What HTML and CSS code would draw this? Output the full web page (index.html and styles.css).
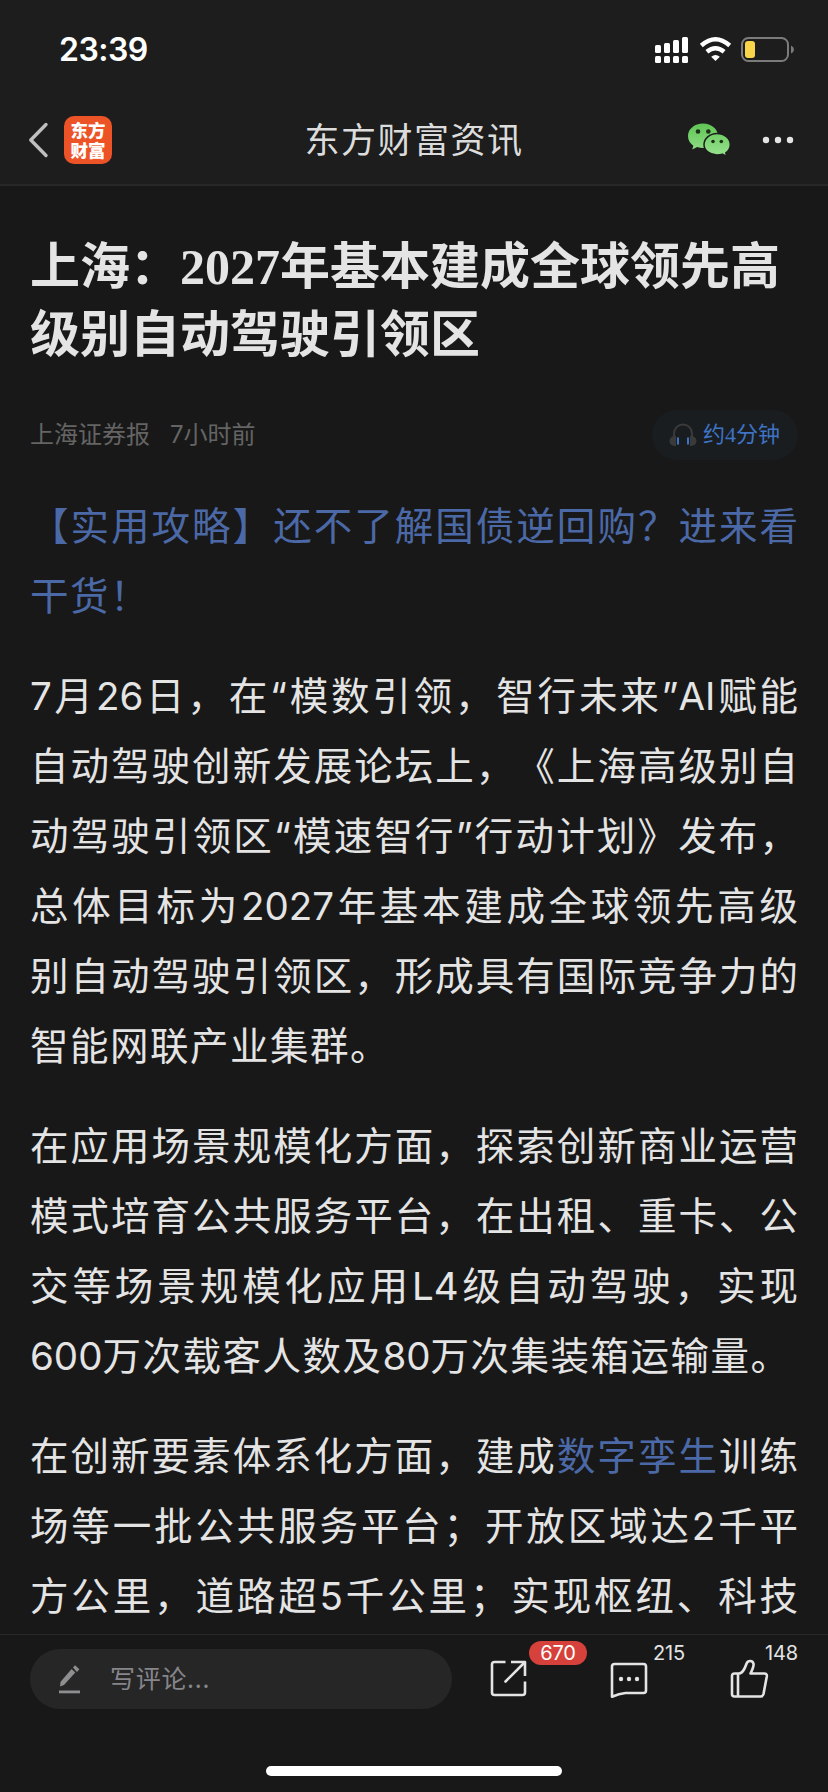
FILE: index.html
```html
<!DOCTYPE html>
<html lang="zh-CN">
<head>
<meta charset="utf-8">
<title>东方财富资讯</title>
<link rel="stylesheet" href="styles.css">
</head>
<body>
<div class="screen">
  <header class="top">
    <div class="status">
      <span class="clock">23:39</span>
      <svg class="status-icons" width="142" height="30" viewBox="0 0 142 30">
        <g fill="#fff">
          <rect x="1" y="10" width="6" height="8" rx="1.5"/><rect x="10" y="8" width="6" height="10" rx="1.5"/><rect x="19" y="5" width="6" height="13" rx="1.5"/><rect x="28" y="2" width="6" height="16" rx="1.5"/>
          <rect x="1" y="21" width="6" height="7" rx="1.5"/><rect x="10" y="21" width="6" height="7" rx="1.5"/><rect x="19" y="21" width="6" height="7" rx="1.5"/><rect x="28" y="21" width="6" height="7" rx="1.5"/>
          <path d="M61.500 26l-4.300-4.300q4.300-3.500 8.600 0z"/>
        </g>
        <path d="M47.300 10.500q14.200-12.500 28.400 0M52.900 16.800q8.600-7.200 17.200 0" fill="none" stroke="#fff" stroke-width="4.400"/>
        <rect x="88" y="3" width="46" height="23" rx="6.500" fill="none" stroke="#7b7b7b" stroke-width="2"/>
        <rect x="91" y="6" width="10" height="17" rx="3" fill="#f9d649"/>
        <path d="M137 10.500q3 1.500 3 4t-3 4z" fill="#7b7b7b"/>
      </svg>
    </div>
    <nav class="nav">
      <svg class="back" width="22" height="38" viewBox="0 0 22 38"><path d="M19 3.500L3.800 19 19 34.500" fill="none" stroke="#bfbfbf" stroke-width="3.400" stroke-linecap="round" stroke-linejoin="round"/></svg>
      <div class="logo">东方<br>财富</div>
      <h2 class="nav-title">东方财富资讯</h2>
      <svg class="wechat" width="44" height="36" viewBox="0 0 44 36">
        <defs><linearGradient id="wg" x1="0" y1="0" x2="0" y2="36" gradientUnits="userSpaceOnUse"><stop offset="0" stop-color="#5dc452"/><stop offset="1" stop-color="#9be493"/></linearGradient></defs>
        <path d="M16 1.500C7.500 1.500 1 7 1 14c0 4 2 7.400 5.400 9.700L5.200 27.500l5-2.500c1.900.6 3.800.9 5.800.9 8.500 0 15-5.400 15-12S24.500 1.500 16 1.500z" fill="url(#wg)"/>
        <path d="M30 11.500c7.300 0 13.300 4.800 13.300 11 0 3.500-1.700 6.400-4.500 8.300l.9 3.500-4.300-2.200c-1.600.5-3.500.8-5.400.8-7.300 0-13-4.600-13-10.400s5.700-11 13-11z" fill="url(#wg)" stroke="#1d1d1d" stroke-width="1.500"/>
        <g fill="#1d3018"><circle cx="11" cy="9.500" r="2.300"/><circle cx="21.300" cy="9.500" r="2.300"/><circle cx="26" cy="19.500" r="1.800"/><circle cx="34.300" cy="19.500" r="1.800"/></g>
      </svg>
      <svg class="more" width="32" height="8" viewBox="0 0 32 8" fill="#e4e4e4"><circle cx="4" cy="4" r="3.200"/><circle cx="16" cy="4" r="3.200"/><circle cx="28" cy="4" r="3.200"/></svg>
    </nav>
  </header>
  <main class="article">
    <h1 class="title">上海：<span class="num">2027</span>年基本建成全球领先高<br>级别自动驾驶引领区</h1>
    <div class="meta">
      <span>上海证券报</span><span class="time">7小时前</span>
      <div class="listen">
        <svg width="28" height="24" viewBox="0 0 28 24"><path d="M5 13v-2.500a9 9 0 0 1 18 0V13" fill="none" stroke="#3a3a3a" stroke-width="2"/><path d="M7 13H5.500a5 5 0 0 0 0 10H7zM21 13h1.500a5 5 0 0 1 0 10H21z" fill="#3a3a3a"/><path d="M9 14.500v7M19 14.500v7" stroke="#3f73c4" stroke-width="2"/></svg>
        <span>约4分钟</span>
      </div>
    </div>
    <p class="para link"><span class="line">【实用攻略】还不了解国债逆回购？进来看</span><span class="line last">干货！</span></p>
    <p class="para"><span class="line">7月26日，在“模数引领，智行未来”AI赋能</span><span class="line">自动驾驶创新发展论坛上，《上海高级别自</span><span class="line">动驾驶引领区“模速智行”行动计划》发布，</span><span class="line">总体目标为2027年基本建成全球领先高级</span><span class="line">别自动驾驶引领区，形成具有国际竞争力的</span><span class="line last">智能网联产业集群。</span></p>
    <p class="para"><span class="line">在应用场景规模化方面，探索创新商业运营</span><span class="line">模式培育公共服务平台，在出租、重卡、公</span><span class="line">交等场景规模化应用L4级自动驾驶，实现</span><span class="line last"><span class="digits">600</span>万次载客人数及<span class="digits">80</span>万次集装箱运输量。</span></p>
    <p class="para"><span class="line">在创新要素体系化方面，建成<span class="link">数字孪生</span>训练</span><span class="line">场等一批公共服务平台；开放区域达2千平</span><span class="line">方公里，道路超5千公里；实现枢纽、科技</span></p>
  </main>
  <footer class="bottom">
    <div class="actions">
      <div class="comment">
        <svg width="22" height="30" viewBox="0 0 22 30" fill="#8e8e90"><path d="M1 22.500l.6-4.800L12.600 5l3.700 3.400L5 21z"/><path d="M14 3.600L16 1.200l4.400 4.100-2.500 2.600z"/><rect x="0" y="26.500" width="21" height="2.800"/></svg>
        <span>写评论...</span>
      </div>
      <div class="action">
        <svg width="38" height="38" viewBox="0 0 38 38" fill="none" stroke="#e4e4e4" stroke-width="2.600" stroke-linecap="butt" stroke-linejoin="round"><path d="M15.500 2H4.500Q2 2 2 4.500v28Q2 35 4.500 35h28q2.500 0 2.500-2.500V21.500M21 2h14v14"/><path d="M34 3L15.500 21.500" stroke-linecap="round"/></svg>
        <span class="badge">670</span>
      </div>
      <div class="action">
        <svg width="38" height="38" viewBox="0 0 38 38" fill="none" stroke="#e4e4e4" stroke-width="2.600" stroke-linejoin="round"><path d="M4.500 4h29Q36 4 36 6.500v24q0 2.500-2.500 2.500H15.500Q9 33.500 2 36.700V6.500Q2 4 4.500 4z"/><g fill="#e4e4e4" stroke="none"><circle cx="11" cy="19" r="2.200"/><circle cx="19" cy="19" r="2.200"/><circle cx="27" cy="19" r="2.200"/></g></svg>
        <span class="count">215</span>
      </div>
      <div class="action">
        <svg width="40" height="40" viewBox="0 0 40 40" fill="none" stroke="#e4e4e4" stroke-width="2.600" stroke-linejoin="round"><path d="M7.500 14.500H4.500Q2 14.500 2 17v18q0 2.500 2.500 2.500h26q2.400 0 3-2.500l3.300-17.500q.4-3-2.500-3H20.500C22.500 10.500 24 7 23.500 4.700c-.7-3.500-5.600-3.700-6.800-.4C15 9 13 14.500 9 14.500zM8 14.500v23"/></svg>
        <span class="count like">148</span>
      </div>
    </div>
    <div class="home"></div>
  </footer>
</div>
</body>
</html>
```
FILE: styles.css
```css
* { box-sizing: border-box; margin: 0; padding: 0; }
body { background: #181818; font-family: Inter, "Noto Sans CJK SC", sans-serif; color: #e4e4e4; text-spacing-trim: space-all; }
svg { display: block; flex: none; }
.screen { width: 828px; height: 1792px; display: flex; flex-direction: column; overflow: hidden; }
.top { height: 186px; flex: none; background: #1d1d1d; border-bottom: 2px solid #272727; }
.status { height: 94px; padding: 6px 32px 0 59px; display: flex; align-items: center; justify-content: space-between; }
.clock { font: 600 32px/40px Inter, sans-serif; color: #fff; letter-spacing: -0.5px; }
.nav { height: 92px; padding: 0 34px 0 27px; display: flex; align-items: center; }
.logo { width: 48px; height: 48px; padding-top: 4px; margin-left: 15px; border-radius: 10px; background: #ec5428; color: #fff; text-align: center; font: 900 17.500px/20px "Noto Sans CJK SC", sans-serif; }
.nav-title { flex: 1; padding-left: 29px; text-align: center; font-size: 35px; font-weight: 400; letter-spacing: 1.500px; line-height: 50px; color: #dcdcdc; }
.wechat { margin-right: 31px; }
.article { flex: 1; min-height: 0; padding: 47px 30px 0; overflow: hidden; }
.title { font: 700 50px/68px "Liberation Sans", "Noto Sans CJK SC", sans-serif; white-space: nowrap; }
.num { font-family: "Liberation Serif", serif; }
.meta { height: 50px; margin-top: 41px; display: flex; align-items: center; font-size: 24px; line-height: 30px; color: #646464; }
.time { margin-left: 20px; }
.listen { margin-left: auto; width: 146px; height: 50px; padding-left: 17px; border-radius: 25px; background: #191d20; color: #3f73c4; display: flex; align-items: center; gap: 6px; font: 22px/30px "Liberation Serif", "Noto Sans CJK SC", sans-serif; white-space: nowrap; }
.para { margin-top: 30px; font-size: 38.500px; line-height: 70px; }
.meta + .para { margin-top: 31px; }
.line { display: block; height: 70px; white-space: nowrap; text-align: justify; text-align-last: justify; }
.line.last { text-align-last: left; letter-spacing: 1.500px; }
.digits { letter-spacing: 0; }
.link { color: #4c69a7; }
.bottom { height: 158px; flex: none; border-top: 1px solid #292929; display: flex; flex-direction: column; align-items: center; }
.actions { width: 100%; height: 88px; padding-left: 30px; display: flex; align-items: center; }
.comment { width: 422px; height: 60px; flex: none; padding-left: 29px; border-radius: 30px; background: #262626; color: #85858a; display: flex; align-items: center; gap: 29px; font: 25px/56px "Noto Sans CJK SC", sans-serif; letter-spacing: 0.700px; }
.comment span { height: 60px; }
.action { position: relative; flex: none; margin-left: 38px; width: 82px; height: 40px; display: flex; align-items: center; }
.badge, .count { position: absolute; left: 43px; top: -18px; height: 24px; font: 20px/24px Inter, sans-serif; letter-spacing: -0.200px; }
.count.like { left: 35px; }
.badge { left: 39px; width: 58px; border-radius: 12px; background: #d6423b; color: #fff; text-align: center; }
.home { width: 296px; height: 10px; margin-top: 43px; border-radius: 5px; background: #fff; }
```
